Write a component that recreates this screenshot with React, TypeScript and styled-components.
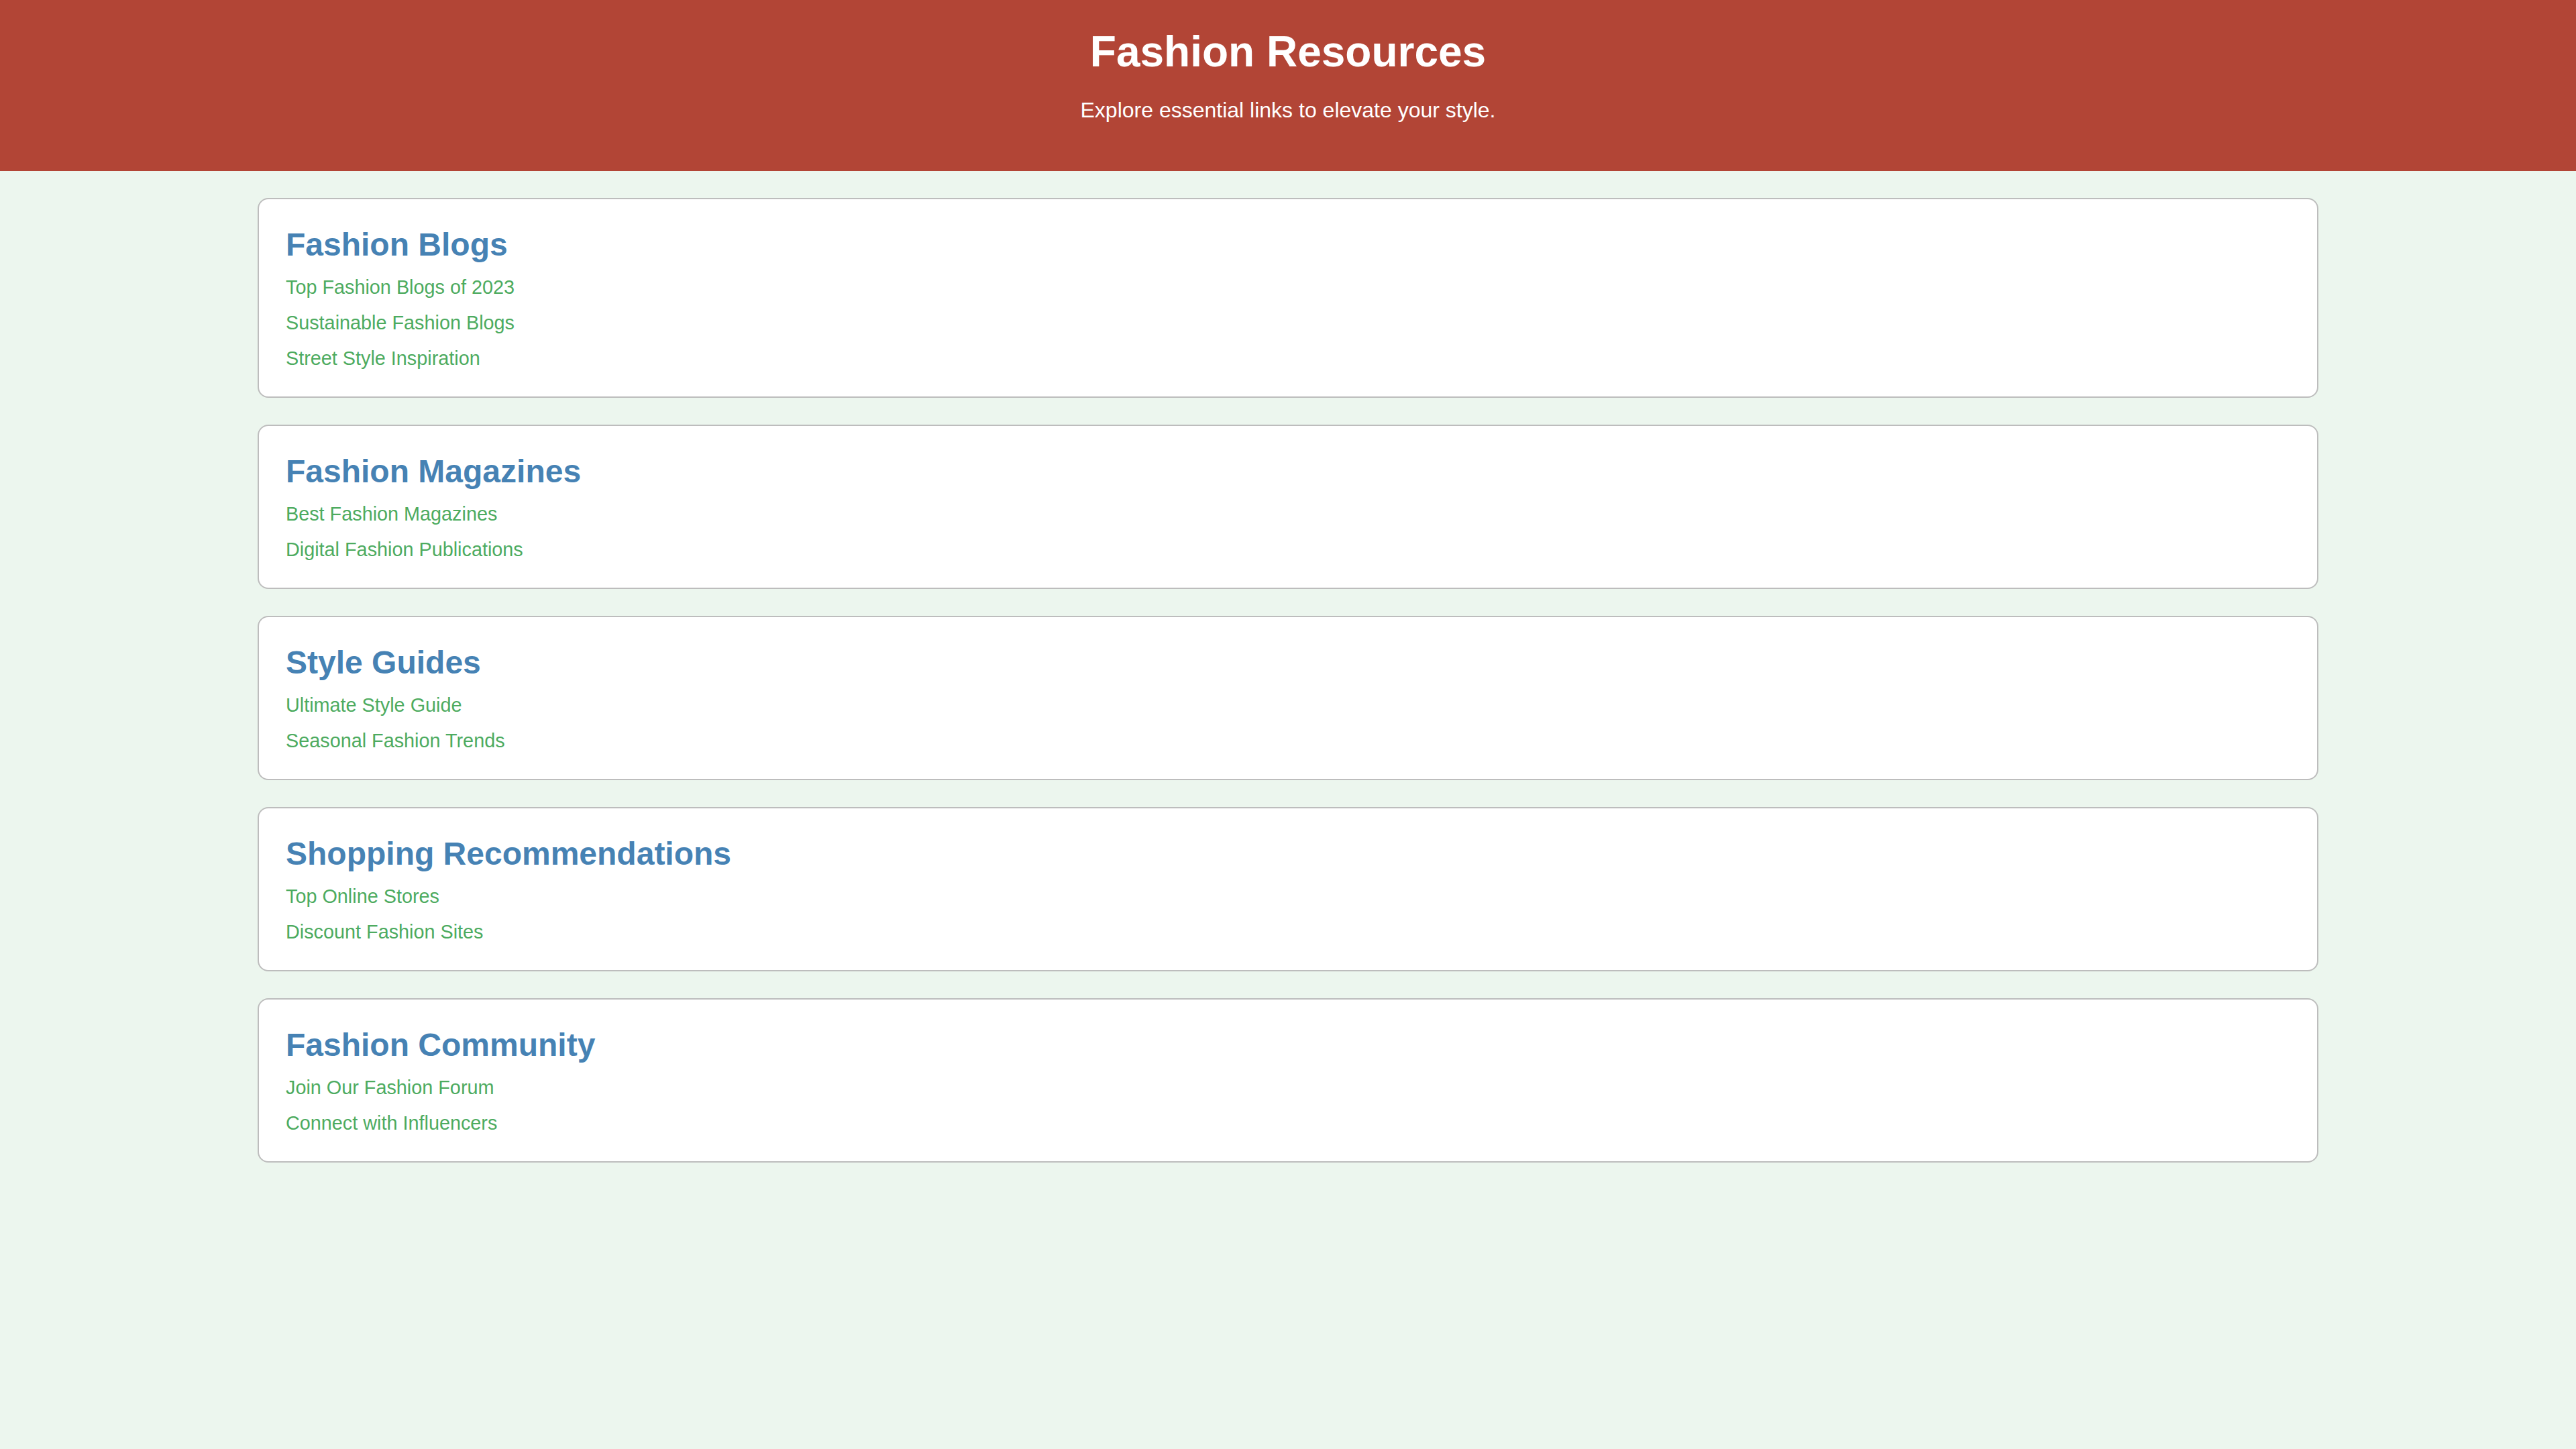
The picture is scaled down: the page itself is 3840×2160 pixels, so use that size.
import React from "react";
import styled, { createGlobalStyle } from "styled-components";

const GlobalStyle = createGlobalStyle`
  html, body {
    margin: 0;
    padding: 0;
    background: #ecf6ee;
    font-family: "Liberation Sans", Arial, sans-serif;
  }
  * { box-sizing: border-box; }
`;

const Page = styled.div`
  min-height: 2160px;
  background: #ecf6ee;
  padding-bottom: 40px;
`;

const Header = styled.header`
  background: #b24536;
  color: #ffffff;
  text-align: center;
  padding: 40px 20px;
`;

const Title = styled.h1`
  margin: 0;
  font-size: 64px;
  font-weight: bold;
`;

const Subtitle = styled.p`
  margin: 32px 0;
  font-size: 32px;
`;

const Main = styled.main`
  display: flex;
  flex-direction: column;
  align-items: center;
  gap: 40px;
  padding-top: 40px;
`;

const Card = styled.section`
  width: 80%;
  background: #ffffff;
  border: 2px solid #bdbdbd;
  border-radius: 16px;
  padding: 40px;
`;

const CardTitle = styled.h2`
  margin: 0 0 20px;
  font-size: 48px;
  font-weight: bold;
  color: #4682b4;
`;

const LinkList = styled.ul`
  list-style: none;
  margin: 0;
  padding: 0;
  display: flex;
  flex-direction: column;
  gap: 20px;
`;

const LinkItem = styled.li`
  font-size: 28.8px;
`;

const Link = styled.a`
  color: #4dab5f;
  text-decoration: none;
`;

const sections = [
  {
    title: "Fashion Blogs",
    links: ["Top Fashion Blogs of 2023", "Sustainable Fashion Blogs", "Street Style Inspiration"],
  },
  {
    title: "Fashion Magazines",
    links: ["Best Fashion Magazines", "Digital Fashion Publications"],
  },
  {
    title: "Style Guides",
    links: ["Ultimate Style Guide", "Seasonal Fashion Trends"],
  },
  {
    title: "Shopping Recommendations",
    links: ["Top Online Stores", "Discount Fashion Sites"],
  },
  {
    title: "Fashion Community",
    links: ["Join Our Fashion Forum", "Connect with Influencers"],
  },
];

export default function App() {
  return (
    <>
      <GlobalStyle />
      <Page>
        <Header>
          <Title>Fashion Resources</Title>
          <Subtitle>Explore essential links to elevate your style.</Subtitle>
        </Header>
        <Main>
          {sections.map((s) => (
            <Card key={s.title}>
              <CardTitle>{s.title}</CardTitle>
              <LinkList>
                {s.links.map((l) => (
                  <LinkItem key={l}>
                    <Link href="#">{l}</Link>
                  </LinkItem>
                ))}
              </LinkList>
            </Card>
          ))}
        </Main>
      </Page>
    </>
  );
}
